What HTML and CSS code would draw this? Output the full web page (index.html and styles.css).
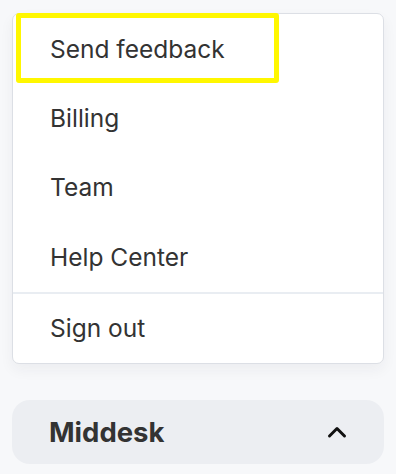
FILE: index.html
```html
<!DOCTYPE html>
<html>
<head>
<meta charset="utf-8">
<link rel="stylesheet" href="styles.css">
</head>
<body>
<div class="page">
  <div class="menu">
    <div class="item">Send feedback</div>
    <div class="item">Billing</div>
    <div class="item">Team</div>
    <div class="item">Help Center</div>
    <div class="divider"></div>
    <div class="item">Sign out</div>
    <div class="highlight"></div>
  </div>
  <div class="account">
    <span class="account-name">Middesk</span>
    <svg class="chevron" width="20" height="14" viewBox="0 0 20 14"><path d="M2.5 11 L10 3.5 L17.5 11" fill="none" stroke="#111" stroke-width="3" stroke-linecap="round" stroke-linejoin="round"/></svg>
  </div>
</div>
</body>
</html>
```
FILE: styles.css
```css
html, body {
  margin: 0;
  padding: 0;
  background: #f7f8fa;
}
body {
  font-family: Inter, "Noto Sans", sans-serif;
  color: #333333;
}
.page {
  width: 396px;
  height: 474px;
  padding-top: 13px;
  box-sizing: border-box;
}
.menu {
  position: relative;
  margin: 0 12px 0 12px;
  background: #ffffff;
  border: 1px solid #dcdfe5;
  border-radius: 7px;
  box-shadow: 0 6px 14px rgba(30, 40, 60, 0.05);
  display: flex;
  flex-direction: column;
}
.item {
  height: 69.4px;
  display: flex;
  align-items: center;
  padding-left: 37px;
  font-size: 24.5px;
  letter-spacing: 0;
}
.divider {
  height: 2px;
  background: #e9edf2;
}
.highlight {
  position: absolute;
  top: -1px;
  left: 3px;
  width: 263px;
  height: 70px;
  box-sizing: border-box;
  border: 5px solid #fff700;
  border-radius: 3px;
}
.account {
  margin: 36px 12px 0 12px;
  height: 64px;
  border-radius: 18px;
  background: #eceef2;
  display: flex;
  align-items: center;
  justify-content: space-between;
  padding: 0 37px 0 37px;
}
.account-name {
  font-size: 27.5px;
  font-weight: 700;
}
.chevron {
  display: block;
}
```
